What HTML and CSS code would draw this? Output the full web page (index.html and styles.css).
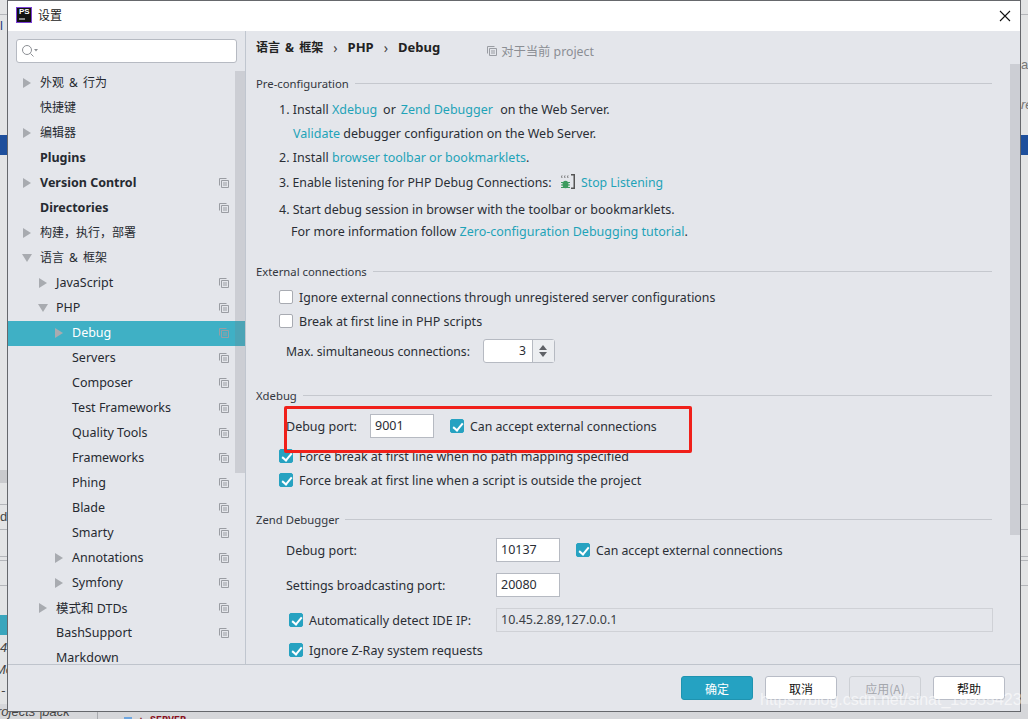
FILE: index.html
```html
<!DOCTYPE html>
<html lang="zh">
<head>
<meta charset="utf-8">
<title>设置</title>
<link rel="stylesheet" href="styles.css">
</head>
<body>
<svg width="0" height="0" class="defs"><defs>
<symbol id="copy" viewBox="0 0 10 10"><path d="M.5 7.500V.5h7M2.500 9.500V2.500h7v7zM4 5h4M4 7h4" fill="none" stroke="#9a9da3"/></symbol>
</defs></svg>
<div class="desk">
  <div class="backdrop">
    <div class="bg-band bg-band-top"></div>
    <div class="bg-band bg-gray"></div>
    <div class="bg-line"></div>
    <div class="bg-line bg-l2"></div>
    <div class="bg-line bg-l3"></div>
    <div class="bg-line bg-l4"></div>
    <div class="bg-line bg-l5"></div>
    <div class="bg-line bg-l6"></div>
    <div class="bg-band bg-band-teal"></div>
    <span class="bg-t t-l">l</span>
    <span class="bg-t t-d">d.</span>
    <span class="bg-t t-4">4</span>
    <span class="bg-t t-m">Me</span>
    <span class="bg-t t-dash">-</span>
    <span class="bg-t t-a">a</span>
    <span class="bg-t t-re">re</span>
    <div class="bg-bottom">
      <span class="bg-proj">rojects |back</span>
      <span class="bg-vline"></span>
      <span class="bg-blue"></span>
      <span class="bg-red">▲ SERVER</span>
    </div>
  </div>
  <div class="dialog">
    <header class="titlebar">
      <svg class="logo" width="16" height="16" viewBox="0 0 16 16"><rect x=".5" y=".5" width="15" height="15" fill="#111" stroke="#7b3fd6"/><rect x="3" y="11.500" width="6" height="1" fill="#fff"/></svg>
      <span class="logo-text">PS</span>
      <span class="title">设置</span>
      <svg class="close" width="12" height="12" viewBox="0 0 12 12"><path d="M1 1l10 10M11 1L1 11" stroke="#111" stroke-width="1.100" fill="none"/></svg>
    </header>
    <div class="main">
      <aside class="side">
        <div class="search">
          <svg width="18" height="14" viewBox="0 0 18 14"><circle cx="6" cy="6" r="4.500" fill="none" stroke="#8d9095"/><path d="M9.500 9.500l3 3" stroke="#8d9095"/><path d="M13 5h4l-2 2.500z" fill="#8d9095"/></svg>
        </div>
        <div class="tree-wrap">
          <ul class="tree">
            <li class="row zh"><i class="arrow"></i><span>外观 &amp; 行为</span></li>
            <li class="row zh"><span>快捷键</span></li>
            <li class="row zh"><i class="arrow"></i><span>编辑器</span></li>
            <li class="row b"><span>Plugins</span></li>
            <li class="row b"><i class="arrow"></i><span>Version Control</span><svg class="cp"><use href="#copy"/></svg></li>
            <li class="row b"><span>Directories</span><svg class="cp"><use href="#copy"/></svg></li>
            <li class="row zh"><i class="arrow"></i><span>构建，执行，部署</span></li>
            <li class="row zh"><i class="arrow down"></i><span>语言 &amp; 框架</span></li>
            <li class="row l1"><i class="arrow"></i><span>JavaScript</span><svg class="cp"><use href="#copy"/></svg></li>
            <li class="row l1"><i class="arrow down"></i><span>PHP</span><svg class="cp"><use href="#copy"/></svg></li>
            <li class="row l2 sel"><i class="arrow"></i><span>Debug</span><svg class="cp"><use href="#copy"/></svg></li>
            <li class="row l2"><span>Servers</span><svg class="cp"><use href="#copy"/></svg></li>
            <li class="row l2"><span>Composer</span><svg class="cp"><use href="#copy"/></svg></li>
            <li class="row l2"><span>Test Frameworks</span><svg class="cp"><use href="#copy"/></svg></li>
            <li class="row l2"><span>Quality Tools</span><svg class="cp"><use href="#copy"/></svg></li>
            <li class="row l2"><span>Frameworks</span><svg class="cp"><use href="#copy"/></svg></li>
            <li class="row l2"><span>Phing</span><svg class="cp"><use href="#copy"/></svg></li>
            <li class="row l2"><span>Blade</span><svg class="cp"><use href="#copy"/></svg></li>
            <li class="row l2"><span>Smarty</span><svg class="cp"><use href="#copy"/></svg></li>
            <li class="row l2"><i class="arrow"></i><span>Annotations</span><svg class="cp"><use href="#copy"/></svg></li>
            <li class="row l2"><i class="arrow"></i><span>Symfony</span><svg class="cp"><use href="#copy"/></svg></li>
            <li class="row l1"><i class="arrow"></i><span>模式和 DTDs</span><svg class="cp"><use href="#copy"/></svg></li>
            <li class="row l1"><span>BashSupport</span><svg class="cp"><use href="#copy"/></svg></li>
            <li class="row l1"><span>Markdown</span></li>
          </ul>
          <div class="thumb thumb-side"></div>
        </div>
      </aside>
      <section class="content">
        <div class="crumbs">
          <b class="crumb-zh">语言 &amp; 框架</b><span class="sep">›</span><b>PHP</b><span class="sep">›</span><b>Debug</b>
          <span class="scope"><svg class="cp"><use href="#copy"/></svg>对于当前 project</span>
        </div>
        <div class="group g-pre"><span>Pre-configuration</span></div>
        <p class="line l-a">1. Install <a class="x1">Xdebug</a><span class="or">or</span><a class="zd">Zend Debugger</a> on the Web Server.</p>
        <p class="line l-b"><a>Validate</a> debugger configuration on the Web Server.</p>
        <p class="line l-a">2. Install <a class="x1">browser toolbar or bookmarklets</a>.</p>
        <p class="line l-a l-3">3. Enable listening for PHP Debug Connections:
          <svg class="bug" width="18" height="18" viewBox="0 0 18 18"><path d="M2 2.500q-.8 1.200 0 2.400M5 2.500q-.8 1.200 0 2.400M8 2.500q-.8 1.200 0 2.400" stroke="#666" fill="none"/><path d="M11 1h4v15h-4v-1.500h2.500v-12H11z" fill="#555"/><ellipse cx="5.500" cy="11.500" rx="3" ry="3.800" fill="#3d9b5f"/><path d="M1 9.500h9M1 12h9M1 14.500h9" stroke="#3d9b5f"/></svg>
          <a>Stop Listening</a></p>
        <p class="line l-a l-4">4. Start debug session in browser with the toolbar or bookmarklets.</p>
        <p class="line l-c">For more information follow <a>Zero-configuration Debugging tutorial</a>.</p>

        <div class="group g-ext"><span>External connections</span></div>
        <label class="check c-first"><i class="box"></i>Ignore external connections through unregistered server configurations</label>
        <label class="check"><i class="box"></i>Break at first line in PHP scripts</label>
        <div class="field f-max"><span>Max. simultaneous connections:</span>
          <div class="spin"><span class="spin-val">3</span><span class="spin-btn"><i class="up"></i><i class="dn"></i></span></div>
        </div>

        <div class="group g-x"><span>Xdebug</span></div>
        <div class="field f-port"><span class="lbl">Debug port:</span><span class="input w64">9001</span><label class="check inline"><i class="box on"></i>Can accept external connections</label></div>
        <label class="check c-force"><i class="box on"></i>Force break at first line when no path mapping specified</label>
        <label class="check"><i class="box on"></i>Force break at first line when a script is outside the project</label>

        <div class="group g-z"><span>Zend Debugger</span></div>
        <div class="field f-zport"><span class="lbl-z">Debug port:</span><span class="input w64">10137</span><label class="check inline"><i class="box on"></i>Can accept external connections</label></div>
        <div class="field f-br"><span class="lbl-z">Settings broadcasting port:</span><span class="input w64">20080</span></div>
        <div class="field f-ip"><label class="check ind"><i class="box on"></i>Automatically detect IDE IP:</label><span class="ip">10.45.2.89,127.0.0.1</span></div>
        <label class="check ind c-zray"><i class="box on"></i>Ignore Z-Ray system requests</label>
        <div class="thumb thumb-main"></div>
        <div class="redbox"></div>
      </section>
    </div>
    <footer class="foot">
      <button class="btn ok">确定</button>
      <button class="btn">取消</button>
      <button class="btn off">应用(A)</button>
      <button class="btn">帮助</button>
    </footer>
  </div>
  <div class="watermark">https://blog.csdn.net/sinat_15955423</div>
</div>
</body>
</html>
```
FILE: styles.css
```css
* { box-sizing: border-box; }
html, body { margin: 0; padding: 0; height: 100%; overflow: hidden; }
body { font-family: "Noto Sans", "Noto Sans CJK SC", sans-serif; font-size: 12.5px; color: #222; background: #d9dadd; }
.defs { position: absolute; }
.desk { position: relative; width: 1028px; height: 719px; overflow: hidden; }

/* window behind the dialog */
.backdrop { position: absolute; inset: 0; background: #e3e4e5; }
.bg-band { position: absolute; left: 0; right: 0; }
.bg-band-top { top: 135px; height: 20px; background: #1e4f9c; }
.bg-gray { top: 470px; height: 13px; right: auto; width: 8px; background: #c9cacd; }
.bg-band-teal { top: 615px; height: 20px; right: auto; width: 8px; background: #3aa6bd; }
.bg-line { position: absolute; left: 0; right: 0; top: 14px; height: 1px; background: #b4b6ba; }
.bg-l2 { top: 504px; }
.bg-l3 { top: 529px; }
.bg-l4 { top: 556px; }
.bg-l5 { top: 560px; }
.bg-l6 { top: 585px; }
.bg-t { position: absolute; font: italic 13px/16px "Liberation Sans", sans-serif; color: #444; }
.t-l { left: 0; top: 18px; color: #1e3f80; font-style: normal; }
.t-d { left: 0; top: 509px; font-style: normal; }
.t-4 { left: 0; top: 640px; }
.t-m { left: -5px; top: 662px; }
.t-dash { left: 1px; top: 683px; }
.t-a { left: 1021px; top: 57px; color: #777; font-style: normal; }
.t-re { left: 1021px; top: 97px; color: #777; }
.bg-bottom { position: absolute; left: 0; right: 0; top: 704px; height: 15px; background: #d6d7da; }
.bg-proj { position: absolute; left: -3px; top: 1px; font: italic 13px/14px "Liberation Sans", sans-serif; color: #444; }
.bg-vline { position: absolute; left: 97px; top: 0; width: 1px; height: 15px; background: #a9abaf; }
.bg-blue { position: absolute; left: 124px; top: 13px; width: 8px; height: 2px; background: #6ea6e0; }
.bg-red { position: absolute; left: 138px; top: 12px; font: bold 10px/10px "Liberation Mono", monospace; color: #8a1020; white-space: nowrap; }

/* dialog */
.dialog { position: absolute; left: 7px; top: 0; width: 1014px; height: 712px; background: #e4e6eb; border: 1px solid #66686c; display: flex; flex-direction: column; }
.titlebar { height: 30px; flex: none; background: #fff; display: flex; align-items: center; padding-left: 8px; position: relative; }
.logo { flex: none; margin-top: -2px; }
.logo-text { position: absolute; left: 11px; top: 6px; font: bold 8px/10px "Liberation Sans", sans-serif; color: #fff; }
.title { margin-left: 6px; margin-top: -2px; font-size: 12px; }
.close { margin-left: auto; margin-right: 9px; margin-top: -1px; }
.main { flex: 1; display: flex; min-height: 0; }

.side { width: 238px; flex: none; border-right: 1px solid #c0c6cf; display: flex; flex-direction: column; }
.search { height: 24px; margin: 8px 8px 0 8px; width: 221px; background: #fff; border: 1px solid #b6bac2; border-radius: 3px; display: flex; align-items: center; padding-left: 4px; flex: none; }
.search svg { display: block; }
.tree-wrap { flex: 1; position: relative; overflow: hidden; margin-top: 8px; }
.tree { list-style: none; margin: 0; padding: 0; }
.row { height: 25px; display: flex; align-items: center; padding: 0 0 3px 32px; position: relative; white-space: nowrap; color: #262a31; }
.row.zh { font-size: 12px; word-spacing: 2px; }
.row.b { font-weight: 700; }
.row.l1 { padding-left: 48px; }
.row.l2 { padding-left: 64px; }
.row.sel { background: #3fb0c5; color: #fff; }
.arrow { position: absolute; left: 15px; top: 7px; width: 0; height: 0; border-left: 8px solid #a8abb0; border-top: 5px solid transparent; border-bottom: 5px solid transparent; }
.arrow.down { border-left: 5px solid transparent; border-right: 5px solid transparent; border-top: 8px solid #a8abb0; border-bottom: 0; left: 14px; top: 8px; }
.l1 .arrow { left: 31px; }
.l1 .arrow.down { left: 30px; }
.l2 .arrow { left: 47px; }
.cp { width: 10px; height: 10px; flex: none; }
.row .cp { position: absolute; left: 211px; top: 7px; }
.thumb { position: absolute; background: rgba(120,124,130,.22); }
.thumb-side { left: 227px; top: 0; width: 10px; height: 402px; }

.content { flex: 1; position: relative; padding: 0 28px 0 10px; overflow: hidden; min-width: 0; }
.crumbs { height: 18px; margin-top: 7px; display: flex; align-items: center; white-space: nowrap; }
.crumbs b { font-weight: 700; font-size: 13px; }
.crumbs .crumb-zh { font-size: 12px; word-spacing: 2px; }
.sep { margin: 0 10px; font-size: 14px; color: #444; }
.scope { margin-left: 47px; padding-top: 7px; color: #8b8e94; display: flex; align-items: center; gap: 4px; font-size: 12.3px; }
.group { display: flex; align-items: center; gap: 6px; height: 18px; white-space: nowrap; color: #33373e; font-size: 11.3px; }
.group::after { content: ""; flex: 1; height: 1px; background: #c5c8ce; }
.g-pre { margin-top: 18px; }
.g-ext { margin-top: 18px; }
.g-x { margin-top: 23px; }
.g-z { margin-top: 18px; }

.line { margin: 0; height: 24px; line-height: 24px; white-space: nowrap; color: #2a2e35; }
.line a { color: #1fa3b8; }
.or { margin: 0 5px 0 6px; }
.zd { margin-right: 4px; }
.l-a { padding-left: 23px; }
.l-b { padding-left: 37px; }
.l-c { padding-left: 35px; margin-top: -1px; }
.l-3 { margin-top: 1px; font-size: 12.3px; }
.l-4 { margin-top: 4px; height: 22px; line-height: 22px; }
.g-pre + .line { margin-top: 6px; }
.bug { vertical-align: -4px; margin: 0 0 0 5px; }

.check { display: flex; align-items: center; height: 24px; white-space: nowrap; color: #2a2e35; padding-left: 23px; }
.c-first { margin-top: 5px; font-size: 12.3px; }
.c-force { margin-top: 6px; }
.check.inline { padding-left: 16px; font-size: 12.3px; }
.check.ind { padding-left: 33px; }
.c-zray { margin-top: 6px; }
.box { width: 14px; height: 14px; margin-right: 6px; flex: none; background: #fff; border: 1px solid #a8abb2; border-radius: 2px; position: relative; }
.box.on { background: #26a2c1; border-color: #26a2c1; }
.box.on::after { content: ""; position: absolute; left: 4px; top: 1px; width: 4px; height: 8px; border: solid #fff; border-width: 0 2px 2px 0; transform: rotate(40deg); }

.field { display: flex; align-items: center; white-space: nowrap; color: #2a2e35; padding-left: 30px; }
.f-max { margin-top: 6px; height: 24px; font-size: 12.2px; }
.spin { margin-left: 13px; width: 72px; height: 24px; background: #fff; border: 1px solid #b6bac2; border-radius: 3px; display: flex; }
.spin-val { flex: 1; text-align: right; padding-right: 6px; line-height: 22px; }
.spin-btn { width: 22px; border-left: 1px solid #b6bac2; background: #eceef1; display: flex; flex-direction: column; align-items: center; justify-content: center; gap: 2px; }
.up { border-left: 4px solid transparent; border-right: 4px solid transparent; border-bottom: 5px solid #5f6267; }
.dn { border-left: 4px solid transparent; border-right: 4px solid transparent; border-top: 5px solid #5f6267; }
.f-port { margin-top: 10px; height: 24px; }
.lbl { width: 84px; }
.lbl-z { width: 210px; }
.input { height: 24px; background: #fff; border: 1px solid #b6bac2; line-height: 22px; padding-left: 4px; }
.w64 { width: 64px; }
.f-zport { margin-top: 10px; height: 24px; }
.f-br { margin-top: 11px; height: 24px; }
.f-ip { margin-top: 11px; height: 24px; padding-left: 0; }
.ip { margin-left: 28px; width: 497px; flex: none; height: 24px; border: 1px solid #cfd1d6; line-height: 22px; padding-left: 4px; color: #3a3e45; }
.f-ip .check { width: 212px; }
.thumb-main { left: 764px; top: 33px; width: 10px; height: 471px; }
.redbox { position: absolute; left: 38px; top: 375px; width: 408px; height: 47px; border: 3px solid #f0201a; border-radius: 2px; }

.foot { height: 47px; flex: none; border-top: 1px solid #bfc4cc; display: flex; justify-content: flex-end; gap: 12px; align-items: flex-start; padding: 11px 15px 0 0; }
.btn { width: 72px; height: 24px; padding: 0; font: 12px "Noto Sans CJK SC", sans-serif; background: #fff; color: #111; border: 1px solid #b8bcc6; border-radius: 3px; }
.btn.ok { background: #25a2c2; color: #fff; border-color: #1f93b0; }
.btn.off { background: transparent; color: #a4a7ad; border-color: #cdd0d5; }
.watermark { position: absolute; left: 760px; top: 690px; font: 16px/20px "Liberation Sans", sans-serif; color: rgba(255,255,255,.6); white-space: nowrap; }
```
